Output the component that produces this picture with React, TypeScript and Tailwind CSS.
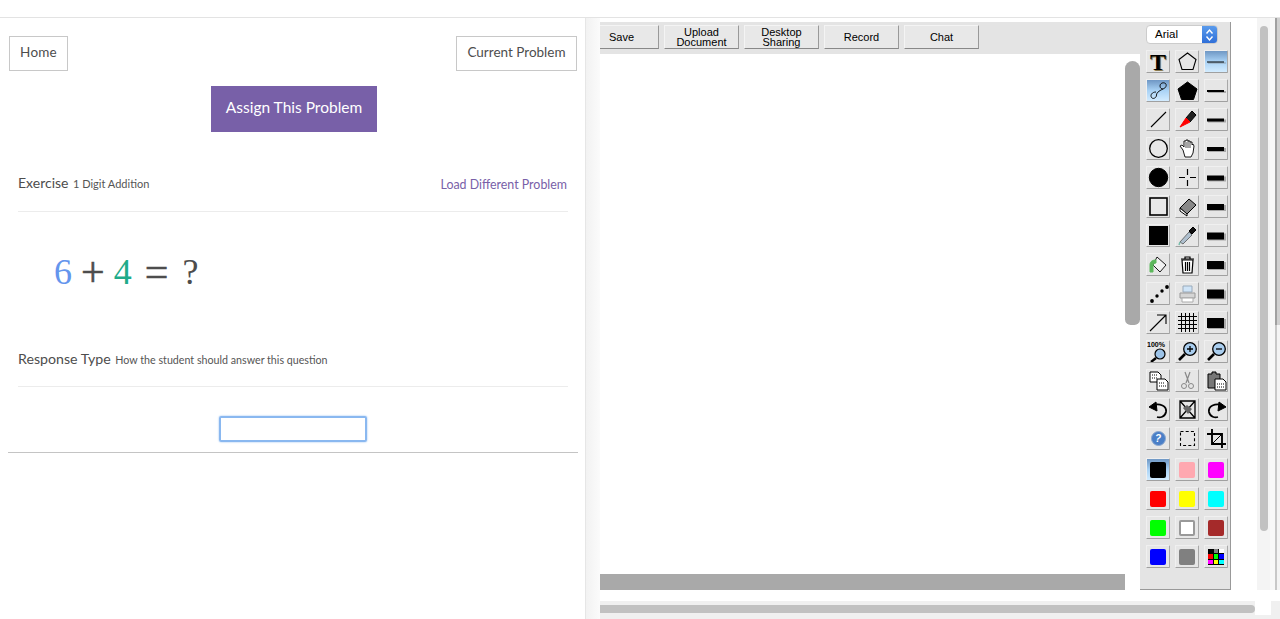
import React from "react";

const Sw = ({ c }: { c: string }) => <span className="w-4 h-4 rounded-[2px]" style={{ background: c }} />;

const Line = ({ h }: { h: number }) => (
  <svg width="20" height="20" viewBox="0 0 20 20">
    <rect x="2" y={10 - h / 2 + 1} width="18" height={h} fill="#777" opacity="0.55" />
    <rect x="1" y={10 - h / 2} width="17" height={h} fill="#000" />
  </svg>
);

const S = ({ children }: { children: React.ReactNode }) => (
  <svg width="21" height="21" viewBox="0 0 21 21" fill="none" stroke="#000" strokeWidth="1">{children}</svg>
);

const tools: { n: React.ReactNode; sel?: boolean }[] = [
  { n: <span className="text-[24px] leading-none font-bold text-black [font-family:'Liberation_Serif',serif] [text-shadow:1px_1px_0_#8a7a50]">T</span> },
  { n: <S><path d="M10.5 2 L19 8.5 L16 18.5 L5 18.5 L2 8.5 Z" strokeWidth="1.1" /></S> },
  { n: <Line h={1} />, sel: true },
  { n: <S><path d="M8 12 C4 12 2 15 3.5 17.5 C5 19.5 8.5 18 8.5 15 C8.5 12 13 10 15 9 C18 8 19 5 17.5 3.5 C15.5 2 12 3 12 6 C12 8 13.5 9 15 9" strokeWidth="0.9" /></S>, sel: true },
  { n: <S><path d="M10.5 2 L20 9 L16.5 19.5 L4.5 19.5 L1 9 Z" fill="#000" /></S> },
  { n: <Line h={2} /> },
  { n: <S><path d="M3 18 L18 3" strokeWidth="1.1" /></S> },
  { n: <S><path d="M9 9 L15 2 L19 6 L13 13 Z" fill="#222" /><path d="M9 9 L13 13 L3 18 Z" fill="#f00" stroke="#f00" /></S> },
  { n: <Line h={3} /> },
  { n: <S><circle cx="10.5" cy="10.5" r="8.8" strokeWidth="1.3" fill="#e8e8e8" /></S> },
  { n: <S><path d="M6 12 L3 8 L5 7 L7 9 L7 3 L9 3 L9 2 L11 2 L11 3 L13 3 L13 4 L15 4 L15 7 L16 6 L17 8 L16 15 L14 19 L8 19 Z" fill="#fff" strokeWidth="0.9" /><path d="M9 4 V10 M11 3 V10 M13 4 V10" strokeWidth="0.7" /></S> },
  { n: <Line h={4} /> },
  { n: <S><circle cx="10.5" cy="10.5" r="9.2" fill="#000" /></S> },
  { n: <S><path d="M10.5 2 V8 M10.5 13 V19 M2 10.5 H8 M13 10.5 H19" strokeWidth="1.2" /></S> },
  { n: <Line h={5} /> },
  { n: <S><rect x="2" y="2" width="17" height="17" strokeWidth="1.6" fill="#e8e8e8" /></S> },
  { n: <S><path d="M3 12 L12 3 L19 9 L10 18 Z" fill="#888" /><path d="M3 12 L10 18 L10 20 L3 15 Z" fill="#fff" /></S> },
  { n: <Line h={6} /> },
  { n: <span className="w-[19px] h-[19px] bg-black" /> },
  { n: <S><path d="M3 17 L12 7 L15 10 L6 19 Z" fill="#aebfce" stroke="#555" strokeWidth="0.8" /><path d="M3 17 L2 20" stroke="#7ba" strokeWidth="1.5" /><path d="M12 6 L16 2 L19 5 L15 9 Z" fill="#111" /></S> },
  { n: <Line h={7} /> },
  { n: <S><path d="M9 3 L18 11 L12 18 L5 11 Z" fill="#f2f2f2" strokeWidth="0.9" /><path d="M2 18 V11 C2 7 5 6 8 6 L8 9 C6 9 5 10 5 12 V18 Z" fill="#5cb85c" stroke="#5cb85c" /></S> },
  { n: <S><path d="M4 5 H17 M8 5 V3 H13 V5" strokeWidth="1.2" /><path d="M5 6 L6 19 H15 L16 6 Z" fill="#fff" strokeWidth="1.2" /><path d="M8.5 8 V17 M10.5 8 V17 M12.5 8 V17" strokeWidth="1.2" /></S> },
  { n: <Line h={8} /> },
  { n: <S><g fill="#000" stroke="none"><circle cx="4" cy="18" r="1.9" /><circle cx="9" cy="13" r="1.7" /><circle cx="14" cy="8" r="1.7" /><circle cx="19" cy="4" r="1.9" /></g></S> },
  { n: <S><path d="M6 3 H15 V9 H6 Z" fill="#cfe4f7" stroke="#9ab" /><path d="M3 10 H18 V15 H3 Z" fill="#d5d5d5" stroke="#999" /><path d="M5 15 H16 V19 H5 Z" fill="#fff" stroke="#aaa" /></S> },
  { n: <Line h={9} /> },
  { n: <S><path d="M2 19 L18 3 M9 3 H18 V12" strokeWidth="1.1" /></S> },
  { n: <S><path d="M4.5 1 V20 M8.5 1 V20 M12.5 1 V20 M16.5 1 V20 M1 4.5 H20 M1 8.5 H20 M1 12.5 H20 M1 16.5 H20" strokeWidth="1" /></S> },
  { n: <Line h={10} /> },
  { n: <div className="relative w-[22px] h-[22px]"><span className="absolute top-[-1px] left-0 text-[7px] leading-[9px] font-bold text-black [font-family:'Liberation_Sans',sans-serif]">100%</span><svg className="absolute top-0 left-0" width="22" height="22" viewBox="0 0 22 22" fill="none" stroke="#000"><circle cx="13" cy="13" r="5" fill="#9cc3e8" strokeWidth="1.2" /><path d="M9 17 L4 21" strokeWidth="2.4" /></svg></div> },
  { n: <S><circle cx="13" cy="8" r="6.3" fill="#a9cdee" strokeWidth="1.3" /><path d="M10 8 H16 M13 5 V11" strokeWidth="1.3" /><path d="M8 13 L2 19" strokeWidth="2.6" /></S> },
  { n: <S><circle cx="13" cy="8" r="6.3" fill="#a9cdee" strokeWidth="1.3" /><path d="M10 8 H16" strokeWidth="1.3" /><path d="M8 13 L2 19" strokeWidth="2.6" /></S> },
  { n: <S><path d="M2 2 H10 L13 5 V12 H2 Z" fill="#fff" /><path d="M4 5 H9 M4 8 H10" strokeDasharray="1 1" /><path d="M9 9 H17 L20 12 V20 H9 Z" fill="#fff" /><path d="M11 13 H17 M11 16 H18" strokeDasharray="1 1" /></S> },
  { n: <S><g stroke="#888"><path d="M8 2 L12 13 M13 2 L9 13" strokeWidth="1.2" /><circle cx="7" cy="16" r="2.5" /><circle cx="14" cy="16" r="2.5" /></g></S> },
  { n: <S><path d="M2 4 H6 V2 H10 V4 H14 V18 H2 Z" fill="#777" /><path d="M9 9 H17 L20 12 V20 H9 Z" fill="#fff" /><path d="M11 14 H18 M11 17 H18" strokeDasharray="1 1" /></S> },
  { n: <S><path d="M5 6 C12 4 19 7 18 13 C17 18 12 19 9 18" strokeWidth="1.8" /><path d="M1 8 L8 3 L9 12 Z" fill="#000" /></S> },
  { n: <S><path d="M3 2 H18 V19 H3 Z M3 2 L18 19 M18 2 L3 19" strokeWidth="1.3" /><path d="M6 9 L10 6 L15 10 L11 15 Z" fill="#666" stroke="none" /></S> },
  { n: <S><path d="M16 6 C9 4 2 7 3 13 C4 18 9 19 12 18" strokeWidth="1.8" /><path d="M20 8 L13 3 L12 12 Z" fill="#000" /></S> },
  { n: <div className="w-[15px] h-[15px] rounded-full bg-[#4a7fc7] border border-[#8aa7cf] flex items-center justify-center text-[10px] leading-none font-bold italic text-white [font-family:'Liberation_Sans',sans-serif]">?</div> },
  { n: <S><rect x="3.5" y="3.5" width="14" height="14" strokeWidth="1.1" strokeDasharray="3 2.2" /></S> },
  { n: <S><path d="M6 1 V16 H20 M1 6 H16 V20" strokeWidth="1.9" /><path d="M7 15 L15 7" strokeWidth="1" /></S> },
];

const colors: { c?: string; sel?: boolean; w?: boolean }[] = [
  { c: "#000", sel: true },
  { c: "#ffa8b0" },
  { c: "#ff00ff" },
  { c: "#ff0000" },
  { c: "#ffff00" },
  { c: "#00ffff" },
  { c: "#00ff00" },
  { w: true },
  { c: "#a52a2a" },
  { c: "#0000ff" },
  { c: "#808080" },
  {},
];

const palette = ["#000", "#808080", "#fff", "#f00", "#0f0", "#00f", "#f0f", "#ff0", "#0ff"];

const btn = "w-[24px] h-[23px] flex items-center justify-center overflow-hidden rounded-[1px] border border-t-[#f0f0f0] border-l-[#f0f0f0] border-r-[#a8a8a8] border-b-[#a0a0a0]";
const normal = "bg-[#e6e6e6]";
const selected = "bg-gradient-to-b from-[#6f97c4] via-[#a9d2f5] to-[#d3ecff]";

const TopBtn = ({ children }: { children: React.ReactNode }) => (
  <button className="w-[75px] h-[24px] shrink-0 bg-[#e8e8e8] border border-t-[#f4f4f4] border-l-[#f4f4f4] border-r-[#999] border-b-[#888] text-[11px] leading-[10px] text-black [font-family:'Liberation_Sans',sans-serif] flex items-center justify-center text-center">
    {children}
  </button>
);

export default function App() {
  return (
    <div className="w-[1280px] h-[619px] overflow-hidden bg-white flex flex-col [font-family:Lato,sans-serif]">
      <div className="h-[18px] shrink-0 border-b border-[#e3e3e3]" />
      <div className="flex-1 flex min-h-0">
        {/* left */}
        <div className="w-[586px] shrink-0 border-r border-[#e6e6e6] flex flex-col">
          <div className="flex justify-between pl-[9px] pr-[8px] pt-[18px]">
            <button className="w-[59px] h-[35px] pb-[2px] border border-[#c8c8c8] text-[13.5px] tracking-[0.2px] text-[#4d4d4d]">Home</button>
            <button className="w-[121px] h-[35px] pb-[2px] border border-[#c8c8c8] text-[13.5px] text-[#4d4d4d]">Current Problem</button>
          </div>
          <div className="flex justify-center mt-[15px] pl-[3px]">
            <button className="w-[166px] h-[46px] pb-[3px] bg-[#7860a8] text-white text-[15.5px]">Assign This Problem</button>
          </div>
          <div className="mx-[18px] mt-[40px] pb-[18px] border-b border-[#ececec] w-[550px] flex items-baseline justify-between h-[40px]">
            <div className="text-[14px] text-[#4d4d4d]">Exercise <span className="text-[11px] ml-[1px] text-[#555]">1 Digit Addition</span></div>
            <div className="text-[12.4px] text-[#7860a8] mr-[1px] translate-y-[1px]">Load Different Problem</div>
          </div>
          <div className="ml-[54px] mt-[33px] h-[54px] flex items-start text-[36px] leading-[54px] text-[#4d4d4d] [font-family:'Liberation_Serif',serif]">
            <span className="text-[#6495ed]">6</span>
            <span className="text-[42px] ml-[9px] [-webkit-text-stroke:0.5px_#4d4d4d]">+</span>
            <span className="text-[#1fab89] ml-[9px]">4</span>
            <span className="text-[42px] ml-[13px] [-webkit-text-stroke:0.5px_#4d4d4d]">=</span>
            <span className="ml-[14px]">?</span>
          </div>
          <div className="mx-[18px] mt-[49px] pb-[15px] border-b border-[#ececec] w-[550px] h-[39px] text-[14.2px] text-[#4d4d4d]">
            Response Type <span className="text-[10.7px] ml-[1px] text-[#555]">How the student should answer this question</span>
          </div>
          <div className="flex justify-center mt-[29px] pl-[1px]">
            <div className="w-[148px] h-[26px] border-[2px] border-[#8ab8f0] rounded-[2px] shadow-[0_0_2px_#8ab8f0]" />
          </div>
          <div className="ml-[8px] mt-[10px] w-[570px] border-b border-[#c4c4c4]" />
        </div>
        {/* gutter */}
        <div className="w-[14px] shrink-0 bg-gradient-to-r from-[#f2f2f2] to-[#fbfbfb]" />
        {/* right */}
        <div className="flex-1 flex flex-col min-w-0">
          <div className="flex-1 flex min-h-0">
            <div className="w-[657px] shrink-0 flex flex-col min-w-0 pt-[4px]">
              <div className="flex-1 flex min-h-0">
                <div className="w-[540px] shrink-0 flex flex-col">
                  <div className="h-[32px] shrink-0 bg-[#e4e4e4] overflow-hidden">
                    <div className="flex items-start pt-[3px] gap-[5px] -ml-[16px]">
                      <TopBtn>Save</TopBtn>
                      <TopBtn><span>Upload<br />Document</span></TopBtn>
                      <TopBtn><span>Desktop<br />Sharing</span></TopBtn>
                      <TopBtn>Record</TopBtn>
                      <TopBtn>Chat</TopBtn>
                    </div>
                  </div>
                  <div className="flex-1 flex min-h-0">
                    <div className="w-[525px] flex flex-col justify-end">
                      <div className="h-[16px] bg-[#a9a9a9]" />
                    </div>
                    <div className="w-[15px] pt-[7px] pb-[265px]">
                      <div className="h-full bg-[#a9a9a9] rounded-t-[8px] rounded-b-[6px]" />
                    </div>
                  </div>
                </div>
                <div className="w-[91px] shrink-0 h-[568px] bg-[#e4e4e4] border-r border-b border-[#999] pl-[6px] pt-[3px]">
                  <div className="h-[19px] w-[72px] rounded-[4px] bg-white border border-[#ccc] flex items-center justify-between overflow-hidden">
                    <span className="pl-[8px] text-[11.5px] text-black [font-family:'Liberation_Sans',sans-serif] leading-none">Arial</span>
                    <span className="w-[15px] h-full bg-gradient-to-b from-[#5a9bec] to-[#2f6fd8] flex items-center justify-center">
                      <svg width="9" height="14" viewBox="0 0 9 14" fill="none" stroke="#fff" strokeWidth="1.4"><path d="M1.5 5.5 L4.5 2 L7.5 5.5 M1.5 8.5 L4.5 12 L7.5 8.5" /></svg>
                    </span>
                  </div>
                  <div className="grid grid-cols-[repeat(3,24px)] gap-x-[5px] gap-y-[6px] mt-[6px]">
                    {tools.map((t, i) => (
                      <div key={i} className={`${btn} ${t.sel ? selected : normal}`}>{t.n}</div>
                    ))}
                  </div>
                  <div className="grid grid-cols-[repeat(3,24px)] gap-x-[5px] gap-y-[6px] mt-[8px]">
                    {colors.map((c, i) => (
                      <div key={i} className={`${btn} ${c.sel ? selected : normal}`}>
                        {c.c ? <Sw c={c.c} /> : c.w ? <span className="w-4 h-4 rounded-[2px] bg-white border-2 border-[#999]" /> : (
                          <span className="w-4 h-4 grid grid-cols-3 grid-rows-3 gap-px bg-black">
                            {palette.map((p) => <span key={p} style={{ background: p }} />)}
                          </span>
                        )}
                      </div>
                    ))}
                  </div>
                </div>
              </div>
            </div>
            <div className="w-[13px] shrink-0 bg-[#f4f4f4] flex justify-center pt-[8px]">
              <div className="w-[8px] h-[505px] rounded-full bg-[#c1c1c1]" />
            </div>
            <div className="w-[5px] shrink-0 bg-[#f8f8f8]" />
            <div className="w-[5px] shrink-0 flex flex-col">
              <div className="h-[307px] border-l-[2px] border-[#a0a0a0] bg-[#d0d0d0]" />
              <div className="flex-1 border-l-[2px] border-[#c8c8c8] bg-[#f4f4f4]" />
            </div>
          </div>
          <div className="h-[18px] shrink-0 bg-[#f0f0f0] mt-[11px] flex">
            <div className="w-[655px] pt-[4px] h-[13px]">
              <div className="w-[655px] h-[8px] rounded-r-full bg-[#c1c1c1]" />
            </div>
            <div className="w-[16px] h-[14px] bg-white" />
          </div>
        </div>
      </div>
    </div>
  );
}
